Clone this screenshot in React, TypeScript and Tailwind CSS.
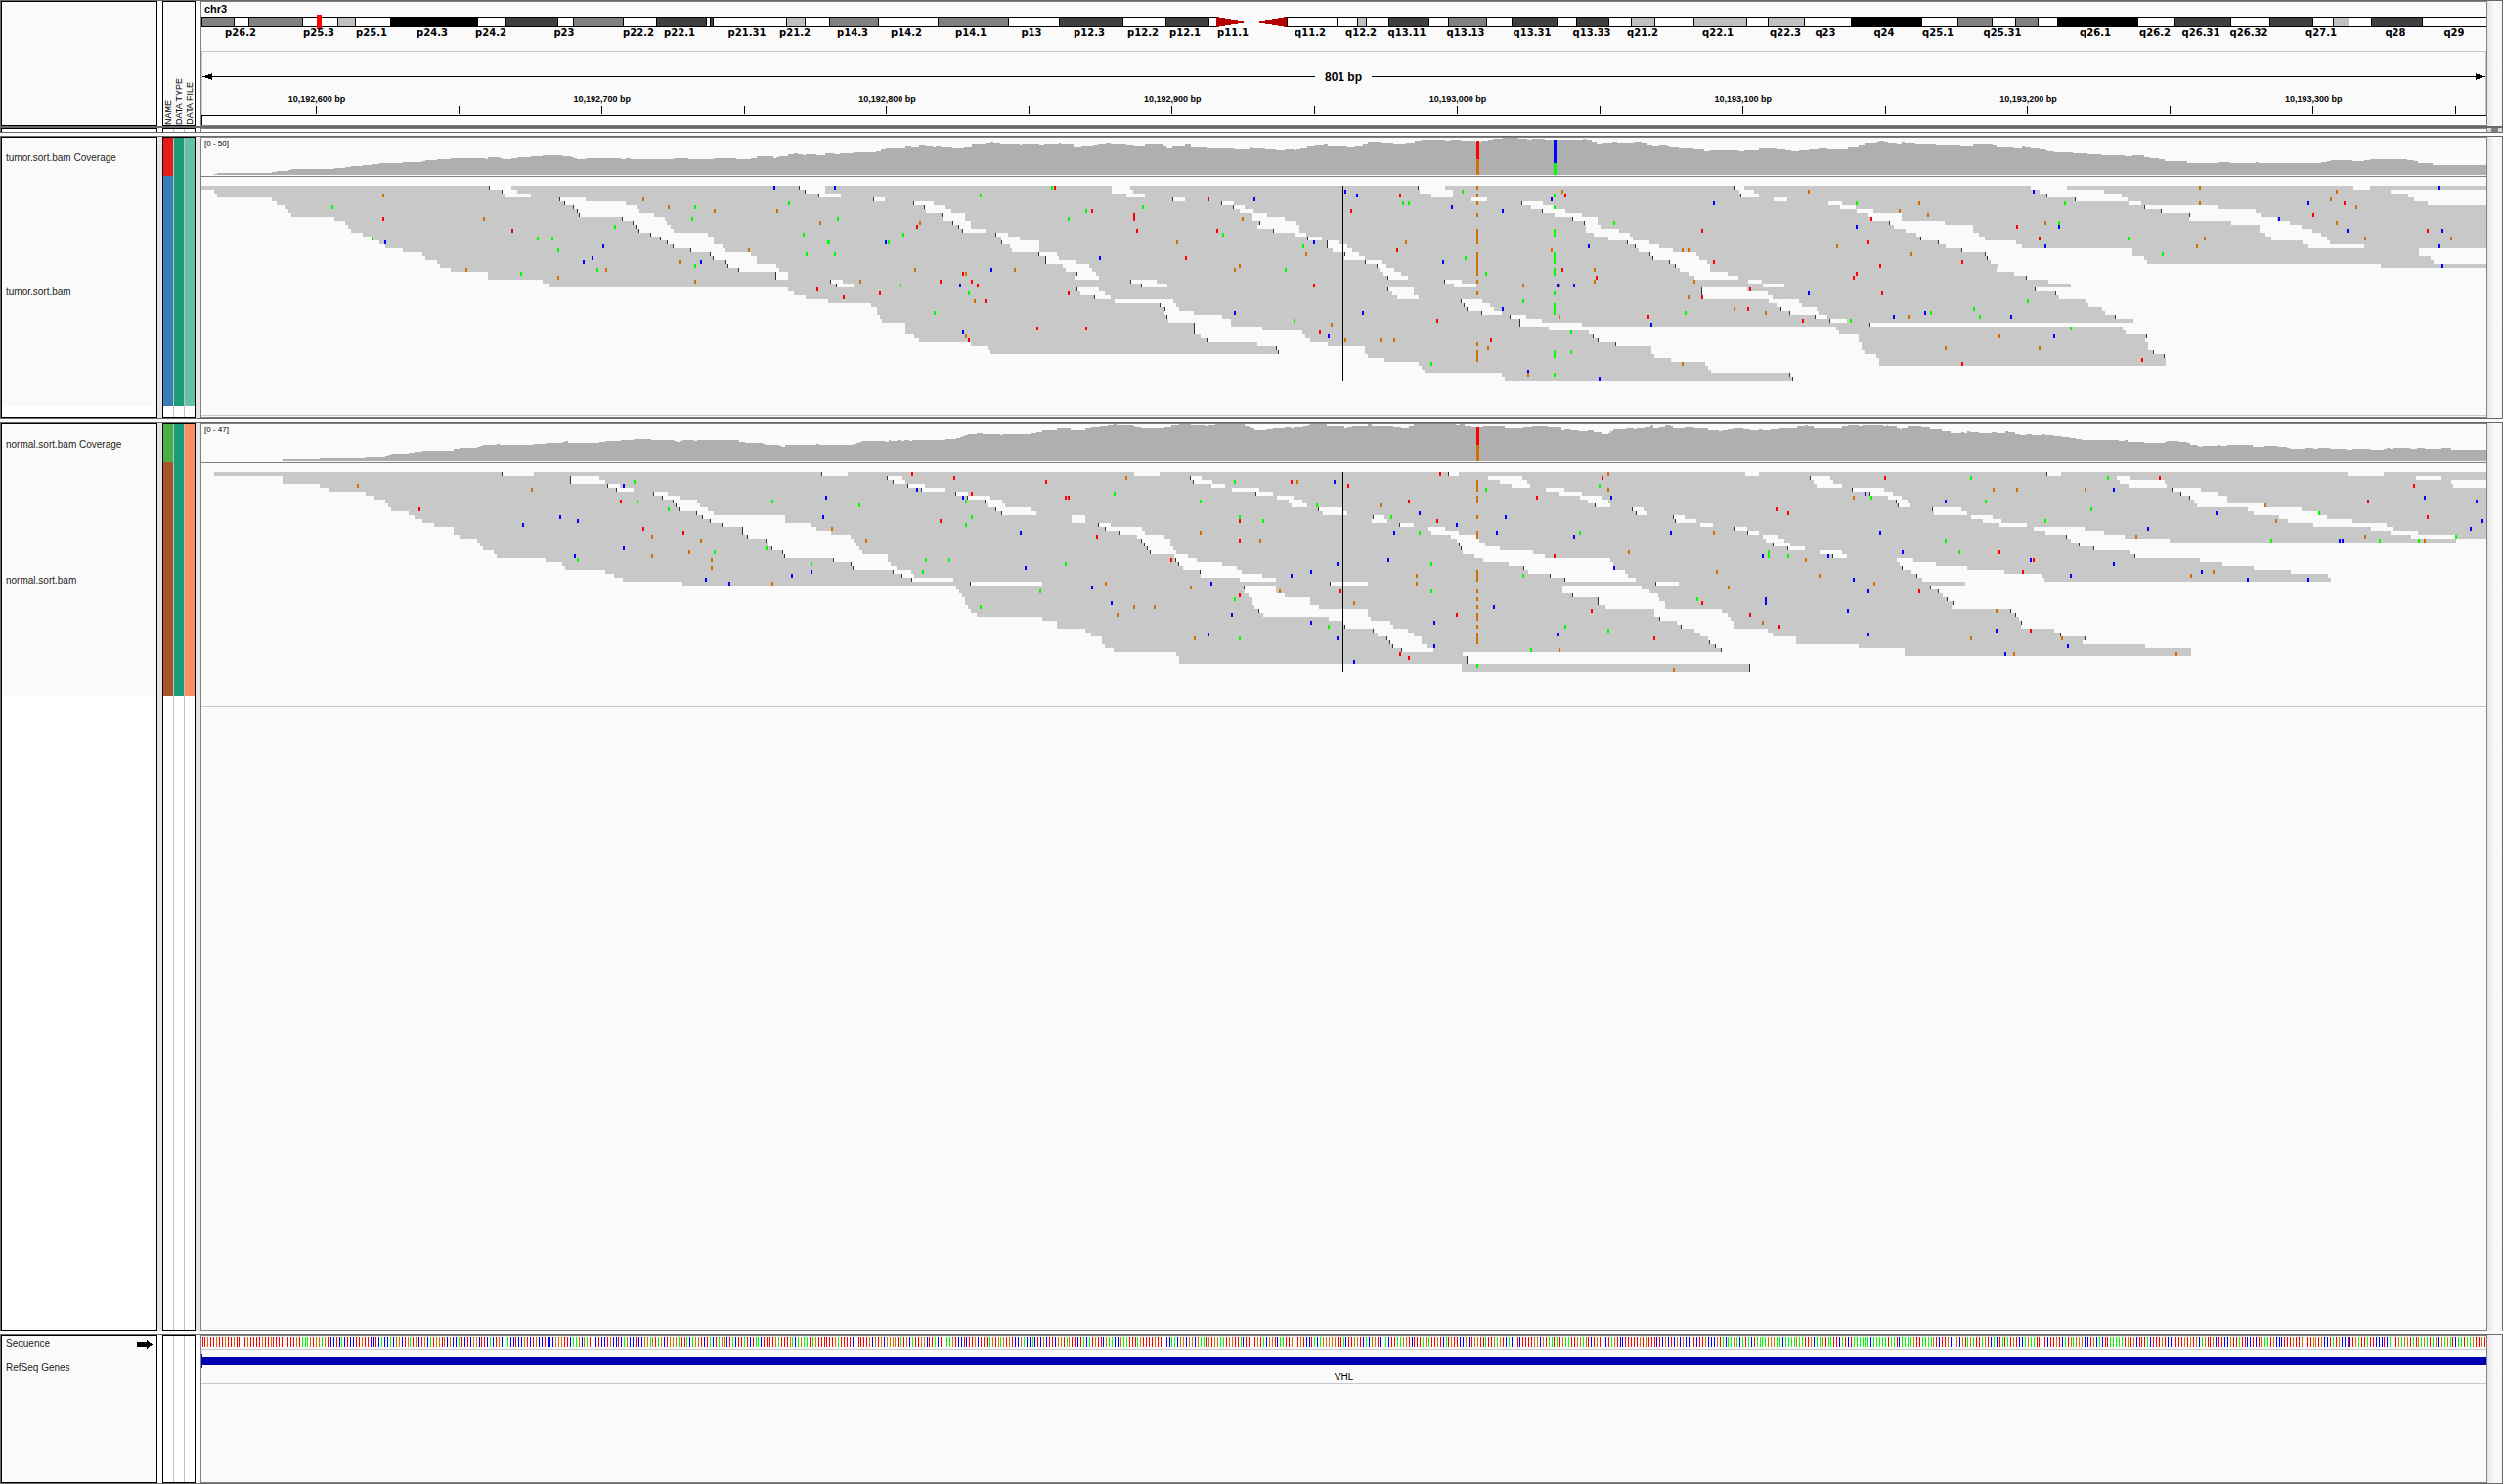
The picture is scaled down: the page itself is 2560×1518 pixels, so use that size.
import React from "react";

type Base = "T" | "G" | "C" | "A";

const BASE_FILL: Record<Base, string> = {
  T: "#ff0000",
  G: "#d17105",
  C: "#0000ff",
  A: "#00ff00",
};

/* Width of the data panel in drawing units and its left edge in the data tables. */
const VIEW_W = 2337;
const VIEW_X = 206;

/* The tables are split in three tiles, each with its own origin and resolution. */
type Tile = { origin: number; scale: number; end: number };
const TILES: Tile[] = [
  { origin: 0, scale: 1568 / 860, end: 1568 },
  { origin: 840, scale: 1568 / 860, end: 1568 },
  { origin: 1690, scale: 1568 / 870, end: 1568 },
];

const toX = (tile: Tile, x: number) =>
  Math.min(VIEW_W, Math.max(0, Math.round(tile.origin + x / tile.scale) - VIEW_X));

type Track = {
  rows: number;
  coverageShift: number;
  coverage: string[];
  gaps: string[];
  marks: string[];
  columns: { x: number; base: Base; rows: number[] }[];
  variants: { x: number; parts: [number, number, Base][] }[];
  endLine: number;
};

/* Rows are separated by "|". "a-b" is an uncovered stretch, "at-b" one that begins with a read-end tick. */
const TUMOR: Track = {
  rows: 50,
  coverageShift: 11,
  endLine: 284,
  coverage: [
    "399,144 405,141 507,138 516,135 538,132 543,129 624,126 644,123 655,120 676,117 693,114 707,111 751,108 788,105 793,102 815,99 841,96 906,99 910,93 932,96 937,99 953,96 965,93 990,90 1012,87 1048,90 1065,93 1070,96 1075,99 1092,96 1157,99 1167,96 1176,99 1256,96 1284,99 1331,96 1373,99 1400,96 1411,90 1442,96 1448,93 1453,90 1470,84 1480,81 1487,84 1497,87 1502,84 1522,87",
    "0,87 7,81 23,84 35,78 60,75 103,72 112,66 120,63 157,57 168,60 182,54 195,57 208,60 213,57 223,60 245,63 267,60 280,51 307,48 316,45 321,48 333,51 370,54 373,51 407,54 416,51 443,48 447,51 470,60 485,57 507,54 516,51 530,48 540,51 569,54 583,57 603,51 636,57 643,63 655,57 679,51 689,60 718,63 770,66 798,60 803,63 827,66 848,69 865,66 882,69 887,66 893,63 907,57 920,54 937,51 945,57 980,60 995,57 1010,51 1020,45 1042,48 1067,51 1090,48 1107,42 1120,39 1163,42 1172,39 1193,42 1220,45 1230,42 1243,39 1253,36 1270,33 1300,36 1317,39 1325,36 1350,39 1420,36 1425,39 1437,45 1445,51 1455,48 1475,45 1485,48 1515,45 1530,48 1540,54",
    "0,57 13,54 27,57 32,60 49,63 75,66 96,72 106,69 158,72 170,69 196,63 228,66 245,69 256,72 270,69 288,66 306,63 323,66 360,60 380,54 391,48 412,45 418,42 427,45 434,48 450,51 460,45 465,48 485,51 523,54 568,57 591,51 628,54 634,60 666,63 681,57 686,60 697,63 713,66 724,69 729,72 740,75 775,78 797,81 802,84 827,87 870,90 885,87 907,93 917,96 933,99 944,105 986,111 1044,108 1065,111 1112,108 1117,111 1233,108 1244,105 1250,102 1290,105 1312,102 1323,99 1391,102 1404,105 1411,111 1438,117",
  ],
  gaps: [
    "911t-953 1490t-1539|0-399 936t-965 1500t-1539|0-405 941t-990 1526t-1568|0-507 1043t-1092|0-516 1052t-1167|0-532 1068t-1187|0-538 1075t-1192|0-543 1080t-1220|0-624 1160t-1240|0-644 1180t-1244|0-649 1186t-1251|0-655 1190t-1256|0-676 1213t-1320|0-693 1230t-1331|0-707 1244t-1331|0-718 1255t-1347|0-751 1287t-1353|0-788 1324t-1400|0-793 1329t-1411|0-815 1352t-1411|0-820 1357t-1448|0-841 1377t-1453|0-910 1446t-1470|0-910 1446t-1470|0-1012 1548t-1568|0-1023 1559t-1568|0-1470|0-1480|0-1502|0-1544",
    "0-7 542-576 1112t-1163|0-7 542-582 1116-1178|0-35 569-603 1138-1178|96t-119 655t-678 1212-1242|172t-210 746t-769 1306t-1345|192t-232 768t-789 1323-1366|195-243 780-806 1343t-1387|224t-268 802-832 1367-1418|226-268 802-864 1401t-1448|245t-279 816t-886 1423t-1448|256t-279 814-892 1426-1454|262t-306 843t-892 1426-1487|325t-348 882-905 1440-1508|336-370 907t-934 1468-1514|336t-407 943t-966 1502t-1545|351-407 943t-980 1517t-1562|356-407 953-990 1525-1568|405t-439 976t-1003 1545t-1568|417t-443 976-1014 1550t-1568|417t-476 1013t-1044|450-500 1035t-1054|456-505 1041-1069|475t-512 1048-1082|472-518 1055t-1094|17t-40 576t-625 1161t-1194|28t-60 597t-645 1180-1222|475t-518 1055t-1105|483-529 1065-1105|508t-540 1074-1114|0-13 547-656 1193t-1232|0-93 630t-662 1198t-1247|0-104 640t-667 1203t-1254|0-104 639-695 1231t-1269|0-109 644t-748 1284t-1315|0-113 647-764 1301t-1344|0-157 694t-764 1301t-1418|0-157 694t-822 1357-1568|0-157 694t-897 1431-1568|0-173 707-903 1439t-1568|0-182 718t-912 1448t-1568|0-279 813-944 1480t-1568|0-310 847t-1014 1548-1568|0-315 852t-1014 1548-1568|0-1019 1553-1568|0-1050|0-1114|0-1119|0-1125|0-1269|0-1274",
    "149t-169 697-764 1292-1323|160-187 714-833 1361-1568|163t-196 727t-865 1393-1568|223-249 779t-876 1404-1568|324-350 878-901 1429-1568|346-375 906t-1044|377-407 938t-1112|398-460 990t-1123|404-460 989-1152|437t-539 1067-1175|445-591 1119-1197|467-591 1119-1217|487-602 1130-1233|494t-613 1141-1244|527t-670 1199-1249|0-13 541-681 1209-1312|0-38 569t-885 1413-1568|0-81 612t-885 1413-1568|0t-87 617t-907 1435-1568|31t-101 623-912 1440-1568|42t-106 637t-1343|50-106 634-1568|67-139 667-1568|77-159 689t-1568|177-202 730-1568|204-243 771-1568|91t-175 705t-1568|91t-213 743t-1568|91-222 750-1568|214-270 798-1568|229-276 803-1568|237t-302 829-1568|253t-306 834-1568|300t-323 853t-1568|327t-359 887-1568|400t-1568|0-339 867-1568|0-344 872-1568|0-380 911t-1568|0-380 909-1568|0-386 914-1568|0-386 914-1568|0-391 922t-1568|4-413 943t-1568|34-418 946-1568|97-418 946-1568|103-1568|108-1568|253t-1568|258t-1568",
  ],
  marks: [
    "714.2G 714.8T 620.5A 695.13A 719.14C 902.8G 955.11T 1003.13A 1030.13A 1041.16A 1125.15C 1147.10A 1105.18C 1088.19C 1114.21A 1130.21G 1041.23G 972.22A 870.21G 1200.3G 1247.5G 1296.5A 1291.8A 1333.6G 1444.0C 1471.4A 1449.6G 1530.9G 1562.8A 1557.0C 1499.12A 1545.14A 1504.17A 1557.17A 1396.16G 1268.19G 1307.19C 1296.20A 1296.24G 1524.26T",
    "25.0C 430.0A 436.0T 297.2A 600.5A 722.3T 808.3C 494.6A 505.6T 583.7T 583.8T 461.8A 184.9G 179.10T 153.12A 14.14A 120.14C 126.14A 25.17A 589.11T 739.11T 749.12A 786.8G 663.14G 898.15A 919.14C 904.17G 680.18T 519.18C 781.20G 771.21G 866.21A 175.21G 317.21C 361.21G 264.22T 270.22G 222.24T 281.24T 73.24G 148.25A 259.25C 292.25T 919.25T 110.27T 275.27A 461.27T 42.28T 286.29G 307.29T 211.32A 771.32C 883.34A 952.35G 403.36T 494.36T 930.37T 264.37C 270.38G 275.39T 946.38C 977.39G 1043.39G 1068.39G 977.1C 999.2C 1079.2T 1085.4A 1096.4A 988.6T 1176.5C 1196.1A 1271.6C 1382.1G 1387.2T 1362.3C 1478.9A 1431.15C 1362.16G 1090.14G 1074.16T 1202.18A 1160.19C 1240.22A 1382.21T 1442.21G 1446.23T 1442.24G 1376.25G 1373.25C 1404.25C 1309.25G 1309.29A 1271.31C 1010.32C 1148.34T 1376.33G 1542.33T 1548.35C 1398.37A 1249.39T 1243.41G 1398.42A 1138.45A 1318.47C 1318.48G 1451.49C",
    "288.1G 113.4C 376.4A 492.4G 456.6G 508.7G 404.8T 376.10C 92.11T 398.14T 340.15G 55.16G 66.16G 477.17G 113.19T 571.19T 420.20T 376.22T 371.23T 77.24G 181.26T 288.27C 423.27T 66.28G 92.28T 151.31G 176.31T 209.32G 61.32A 277.34T 366.34A 445.33C 472.33G 503.32C 513.32A 593.31A 604.33A 661.33C 692.29A 771.36A 741.38C 640.38G 540.41G 714.41G 571.45T 903.44T 55.45G 703.1C 760.4A 724.9G 750.9A 750.10C 672.10T 714.13T 724.15C 878.13A 1018.13G 1004.15G 941.17A 1009.0G 1009.4G 1261.1G 1251.3G 1209.4C 1276.4T 1297.5G 1218.7T 1155.8C 1261.9G 1281.11C 1314.13G 1429.11T 1456.11C 1472.13G 1451.15C 1451.0C 1456.20C",
  ],
  columns: [
    { x: 1304, base: "G", rows: [0, 2, 4, 7, 11, 12, 13, 14, 17, 18, 19, 20, 21, 22, 24, 27, 40, 42, 43, 44] },
    { x: 1383, base: "A", rows: [2, 5, 11, 12, 17, 18, 19, 21, 22, 27, 30, 31, 32, 42, 43, 48] },
  ],
  variants: [
    { x: 1304, parts: [[3, 22, "T"], [22, 38, "G"]] },
    { x: 1383, parts: [[2, 26, "C"], [26, 38, "A"]] },
  ],
};

const NORMAL: Track = {
  rows: 51,
  coverageShift: 14,
  endLine: 288,
  coverage: [
    "527,150 596,147 613,144 682,141 718,138 724,135 729,132 762,129 773,126 788,123 846,117 857,114 890,111 895,108 901,105 926,102 932,105 995,102 1017,99 1048,96 1054,93 1059,99 1118,96 1129,93 1158,90 1181,87 1214,90 1256,93 1262,96 1267,93 1273,90 1295,93 1300,90 1378,96 1389,99 1422,102 1427,105 1453,108 1459,111 1464,105 1522,102 1528,105",
    "0,105 60,102 66,99 72,96 77,93 120,96 125,90 130,93 142,90 150,93 155,90 165,93 169,90 232,87 252,84 258,81 263,78 268,75 274,72 290,69 300,72 333,75 337,72 390,69 402,66 412,60 440,54 465,60 492,54 503,51 520,48 535,45 545,43 551,45 581,48 586,51 596,54 640,51 652,45 668,42 690,45 716,48 720,45 735,42 749,45 750,42 790,48 796,51 801,54 807,60 829,57 842,54 864,51 876,54 881,51 898,48 908,45 912,42 942,48 975,54 980,51 990,48 1020,42 1026,48 1066,51 1082,54 1095,48 1105,42 1183,45 1190,42 1199,48 1213,51 1235,48 1275,54 1310,51 1326,48 1355,51 1380,60 1385,57 1397,60 1413,63 1430,60 1440,66 1455,72 1467,69 1472,63 1477,57 1500,54 1515,57 1520,54 1535,51 1547,45",
    "0,45 2,54 13,51 23,45 32,48 37,54 60,51 77,54 102,60 123,63 128,60 139,57 149,54 167,57 180,60 196,57 202,60 218,57 234,54 266,48 281,45 287,48 298,54 350,48 360,45 380,48 388,45 425,48 432,45 434,48 450,54 456,57 460,54 470,48 495,51 512,57 533,63 550,69 570,66 575,69 580,63 586,66 602,69 625,66 634,69 650,63 656,66 668,72 677,75 688,72 700,75 717,72 724,75 740,78 755,81 770,84 780,87 791,90 860,93 870,90 876,96 907,99 944,96 948,93 969,96 986,99 992,105 1003,108 1008,111 1012,108 1044,105 1048,108 1060,105 1107,111 1128,108 1153,111 1170,114 1175,117 1202,114 1218,117 1228,114 1249,117 1280,120 1290,117 1323,120 1348,117 1353,114 1359,117 1365,114 1397,117 1410,114 1424,117 1454,114 1472,120",
  ],
  gaps: [
    "0-399 936t-995 1532t-1568|0-527 1063t-1118|0-527 1063t-1129|0-596 1132t-1156|0-613 1149t-1181|0-682 1218t-1245|0-698 1234t-1267|0-718 1255t-1300|0-724 1260t-1305|0-729 1265t-1320|0-762 1298t-1331|0-773 1309t-1464|0-788 1324t-1464|0-810 1345t-1511|0-846 1383t-1522|0-846 1383t-1550|0-857 1393t-1568|0-890 1427t-1568|0-895 1432t-1568|0-901 1438t-1568|0-921 1458t-1568|0-926 1462t-1568|0-1017 1554t-1568|0-1048|0-1054|0-1129|0-1145|0-1161|0-1273",
    "0t-49 583-631 1168t-1189|123t-151 688t-709 1243-1307|133t-157 693t-730 1265-1316|160t-193 727-753 1287-1322|186t-232 766-816 1351-1386|250t-273 810t-842 1377-1418|272t-315 850-881 1415-1455|305t-337 872-897 1430-1467|310t-343 877-906 1443t-1471|325t-390 926t-974 1511t-1534|336t-401 935-981 1518t-1541|467-492 1028t-1050|467-492 1026-1056|516t-540 1077t-1105|528t-598 1132-1163|0-18 555t-603 1138-1189|0-55 589-640 1174-1225|0-60 597t-651 1186-1227|0-66 602t-651 1188t-1238|0-71 607t-656 1192t-1265|0-77 613t-662 1196-1327|0-124 658-684 1218-1349|22t-124 660t-700 1234-1471|54t-129 665t-748 1282-1477|59t-140 675-774 1310t-1480|133t-168 705t-784 1318-1499|150t-173 707-822 1358t-1504|167t-246 780-848 1385t-1519|278t-412 948t-1019 1555t-1568|0-252 788t-848 1382-1530|0-257 790-848 1382-1545|0-263 797-864 1401t-1560|0-268 802-912 1448t-1563|0-268 802-912 1448t-1568|0-273 808-928 1462-1568|0-279 815t-1019 1554-1568|0-290 824-1019 1560-1568|0-412 946-1025 1562t-1568|0-439 972-1061|0-439 976t-1067|0-492 1028t-1094|0-503 1037-1105|0-523 1054t-1119|0-523 1059t-1119|0-529 1065t-1130|0-545 1082t-1141|0-662 1196-1568|0-667 1204t-1568|0-667 1204t-1568|0-1194|0-1194",
    "171-196 727t-753 1281-1348|291t-328 856-880 1408-1454|297-333 861-944 1472-1568|303-350 878-948 1476-1568|368t-427 957t-1011|401t-443 973t-1044|434-460 990t-1060|448t-470 998-1060|453t-476 1004-1131|516t-570 1098-1197|519-580 1108-1228|37t-59 588-627 1155-1244|42t-81 609-643 1171-1290|88-112 640-690 1218-1354|149t-175 703-797 1325-1364|174t-196 725-833 1361-1411|204-232 763t-871 1399-1480|209-243 771-953 1481-1568|221t-254 785t-1568|248t-281 812t-1568|308-350 880t-1568|332t-359 889t-1568|451-481 1009-1568|456-523 1051-1568|459t-580 1108-1568|478-649 1177-1568|486t-717 1245-1568|497-723 1251-1568|6t-49 577-1568|511t-1568|527t-1568|0-7 535-1568|0-13 543t-1568|0-23 554t-1568|0-23 552-1568|4-128 659t-1568|4-139 669t-1568|12t-144 675-1568|45-150 680t-1568|53t-150 680-1568|77-213 741-1568|88-222 752t-1568|103-265 796t-1568|105t-265 793-1568|115t-380 908-1568|127t-465 993-1568|0-465 993-1568|0-1568|0-1568|179t-1568|179t-1568",
  ],
  marks: [
    "667.3G 992.4G 783.9T 1183.2A 1163.3C 1158.7T 1189.7A 1247.9A 1045.11C 1077.12C 975.13C 1200.14T 1216.16G 1274.15T 1307.17G 1285.20G 1333.20A 1163.19C 1216.21G 1072.21C 1077.22A 1327.22G 1327.24G 1316.27C 1360.28C 1440.28G 1430.19A 1513.23A 1513.25C 1477.26C 1440.7A 1540.6C 1535.11C 1551.14G",
    "169.0T 248.1T 419.2T 569.1G 179.4C 281.5T 264.6C 270.7A 72.8A 456.6T 461.6T 547.5A 281.11A 222.12T 270.13A 372.15C 514.16T 84.17G 771.2A 877.2T 888.2G 957.2C 983.3T 707.7A 925.8A 781.11A 781.12T 824.12A 1043.8G 1096.7T 1116.10C 1063.11A 1148.12T 1185.13C 707.15G 781.17T 818.17G 1068.15C 1116.15A 195.22A 239.22A 456.23A 381.24C 189.25A 653.22T 963.23C 913.25C 877.26C 1057.22C 1138.23A 1110.26G 1110.28G 530.28G 505.29C 408.30A 690.29G 727.28C 781.31T 771.32A 855.30G 968.30T 993.33G 1138.30A 541.33C 583.34G 622.34G 297.34A 552.36G 766.36C 913.38C 946.39A 722.41C 696.42G 781.42A 963.42C 1079.46T 1096.47T 993.48C 1143.38C 1143.44C 1185.36T 1223.49A 1254.34C 1154.0T 1468.0G 1457.1T 1451.3A 1468.4G 1240.4A 1334.6T 1473.6C 1276.11C 1260.15C 1415.15A 1404.16C 1506.20G 1367.21T 1478.24C 1309.26A 1437.35T 1387.39A 1373.41C 1468.40A 1553.42T 1324.45A 1376.45G",
    "429.1T 587.1A 840.1A 935.1T 629.4G 672.4G 798.4G 850.4C 393.5C 404.6A 371.6G 540.7C 614.7A 229.9T 250.10T 809.9A 1040.10C 1130.8G 1229.10A 1150.12G 724.12A 914.14C 892.16G 34.15C 113.15G 420.15C 540.17A 1404.3T 1424.6C 1319.7T 1519.7C 1429.11T 1530.12C 1508.14C 1314.16G 1481.16A 1141.17A 1267.17C 1272.17C 1341.17A 1413.17A 1424.17G 461.20C 566.20A 640.20T 214.20A 214.21A 203.21C 250.21A 324.21C 283.22G 698.22C 703.22T 850.23C 683.25T 771.26C 1013.25C 1034.25G 993.26G 1097.27C 1209.27C 119.25G 308.26G 371.27C 409.28G 140.29G 398.30C 492.30T 83.32A 92.33T 209.32C 209.33C 360.35C 634.35G 181.36T 203.38G 234.39T 634.40C 698.40T 398.41C 587.42G 755.42G 766.44C 650.46C 667.46G 966.46G 39.50G",
  ],
  columns: [
    { x: 1304, base: "G", rows: [2, 3, 4, 6, 7, 11, 15, 16, 25, 26, 27, 30, 32, 34, 36, 37, 39, 41, 42, 43] },
  ],
  variants: [{ x: 1304, parts: [[3, 21, "T"], [21, 38, "G"]] }],
};

const READ_TOP = 49;
const ROW_H = 4;

function coveragePath(track: Track) {
  let d = "";
  let open = false;
  track.coverage.forEach((line, i) => {
    line.split(" ").forEach((pair) => {
      const [x, y] = pair.split(",").map(Number);
      const px = toX(TILES[i], x);
      const py = Math.round(y / 3) - track.coverageShift;
      d += open ? `H${px}V${py}` : `M${px} 38V${py}`;
      open = true;
    });
  });
  return `${d}H${VIEW_W}V38Z`;
}

function readPaths(track: Track) {
  let gaps = "";
  let ticks = "";
  TILES.forEach((tile, i) => {
    const rows = track.gaps[i].split("|");
    for (let r = 0; r < track.rows; r++) {
      const y = READ_TOP + r * ROW_H;
      (rows[r] ?? `0-${i === 0 ? 1532 : tile.end}`).split(" ").forEach((span) => {
        const [from, to] = span.split("-");
        const a = toX(tile, parseInt(from, 10));
        const b = toX(tile, Number(to));
        gaps += `M${a} ${y}H${b}v${ROW_H}H${a}Z`;
        if (from.endsWith("t")) ticks += `M${a} ${y}h1v${ROW_H}h-1Z`;
      });
    }
  });
  return { gaps, ticks };
}

function markPaths(track: Track) {
  const out: Record<Base, string> = { T: "", G: "", C: "", A: "" };
  track.marks.forEach((line, i) => {
    line.split(" ").forEach((m) => {
      const base = m.slice(-1) as Base;
      const [x, r] = m.slice(0, -1).split(".").map(Number);
      out[base] += `M${toX(TILES[i], x) - 1} ${READ_TOP + r * ROW_H}h2v${ROW_H}h-2Z`;
    });
  });
  track.columns.forEach((c) => {
    c.rows.forEach((r) => {
      out[c.base] += `M${c.x} ${READ_TOP + r * ROW_H}h2v${ROW_H}h-2Z`;
    });
  });
  return out;
}

function AlignmentPlot({ track, label, className }: { track: Track; label: string; className: string }) {
  const { gaps, ticks } = readPaths(track);
  const marks = markPaths(track);
  const bottom = READ_TOP + track.rows * ROW_H;
  const height = track.endLine + 2;
  return (
    <svg
      role="img"
      aria-label={label}
      className={className}
      viewBox={`0 0 ${VIEW_W} ${height}`}
      preserveAspectRatio="none"
      shapeRendering="crispEdges"
    >
      <path d={coveragePath(track)} fill="#afafaf" />
      {track.variants.map((v) =>
        v.parts.map(([from, to, base]) => (
          <rect key={`${v.x}-${from}`} x={v.x} y={from} width={3} height={to - from} fill={BASE_FILL[base]} />
        )),
      )}
      <rect x={0} y={39} width={VIEW_W} height={1} fill="#808080" />
      <rect x={0} y={READ_TOP} width={VIEW_W} height={track.rows * ROW_H} fill="#c8c8c8" />
      <path d={gaps} fill="#fafafa" />
      <path d={ticks} fill="#333333" />
      {(Object.keys(marks) as Base[]).map((b) => (
        <path key={b} d={marks[b]} fill={BASE_FILL[b]} />
      ))}
      <rect x={1167} y={READ_TOP} width={1} height={bottom - READ_TOP} fill="#000000" />
      <rect x={0} y={track.endLine} width={VIEW_W} height={1} fill="#c8c8c8" />
    </svg>
  );
}

const pct = (x: number) => `${((x - VIEW_X) / VIEW_W) * 100}%`;

/* Right edge and stain of every cytoband, in order along the chromosome. */
const BANDS: [number, string][] = [
  [239, "#808080"], [254, "#fff"], [309, "#808080"], [345, "#fff"], [363, "#c0c0c0"], [399, "#fff"],
  [488, "#000"], [517, "#fff"], [570, "#404040"], [586, "#fff"], [637, "#808080"], [671, "#fff"],
  [722, "#404040"], [726, "#fff"], [729, "#404040"], [804, "#fff"], [823, "#c0c0c0"], [848, "#fff"],
  [898, "#808080"], [959, "#fff"], [1031, "#808080"], [1083, "#fff"], [1148, "#404040"], [1192, "#fff"],
  [1236, "#404040"], [1244, "#fff"], [1316, "centromere"], [1367, "#fff"], [1388, "#fff"], [1397, "#c0c0c0"],
  [1420, "#fff"], [1461, "#404040"], [1481, "#fff"], [1520, "#808080"], [1546, "#fff"], [1592, "#404040"],
  [1612, "#fff"], [1645, "#404040"], [1668, "#fff"], [1692, "#c0c0c0"], [1732, "#fff"], [1786, "#c0c0c0"],
  [1808, "#fff"], [1845, "#c0c0c0"], [1893, "#fff"], [1965, "#000"], [2002, "#fff"], [2037, "#808080"],
  [2061, "#fff"], [2084, "#808080"], [2104, "#fff"], [2186, "#000"], [2224, "#fff"], [2281, "#404040"],
  [2321, "#fff"], [2365, "#404040"], [2386, "#fff"], [2402, "#c0c0c0"], [2425, "#fff"], [2477, "#404040"],
  [2543, "#fff"],
];

const BAND_LABELS: [string, number][] = [
  ["p26.2", 246], ["p25.3", 326], ["p25.1", 380], ["p24.3", 442], ["p24.2", 502], ["p23", 577],
  ["p22.2", 653], ["p22.1", 695], ["p21.31", 764], ["p21.2", 813], ["p14.3", 872], ["p14.2", 927],
  ["p14.1", 993], ["p13", 1055], ["p12.3", 1114], ["p12.2", 1169], ["p12.1", 1212], ["p11.1", 1261],
  ["q11.2", 1340], ["q12.2", 1392], ["q13.11", 1439], ["q13.13", 1499], ["q13.31", 1567], ["q13.33", 1628],
  ["q21.2", 1680], ["q22.1", 1757], ["q22.3", 1826], ["q23", 1867], ["q24", 1927], ["q25.1", 1982],
  ["q25.31", 2048], ["q26.1", 2143], ["q26.2", 2204], ["q26.31", 2251], ["q26.32", 2300], ["q27.1", 2374],
  ["q28", 2450], ["q29", 2510],
];

function Ideogram() {
  return (
    <svg role="img" aria-label="chr3 ideogram" className="block h-[34px] w-full" shapeRendering="crispEdges">
      {BANDS.map(([end, fill], i) => {
        const start = i ? BANDS[i - 1][0] : VIEW_X;
        if (fill === "centromere") return null;
        return (
          <rect key={end} x={pct(start)} y={3} width={`${((end - start) / VIEW_W) * 100}%`} height={9} fill={fill} />
        );
      })}
      {BANDS.map(([end, fill]) =>
        end === 2543 ? null : (
          <rect key={`${end}${fill}`} x={pct(end)} y={3} width={1} height={9} fill="#000" />
        ),
      )}
      <rect x="0" y={2} width={pct(1244)} height={1} fill="#000" />
      <rect x="0" y={12} width={pct(1244)} height={1} fill="#000" />
      <rect x={pct(1316)} y={2} width={`${((2543 - 1316) / VIEW_W) * 100}%`} height={1} fill="#000" />
      <rect x={pct(1316)} y={12} width={`${((2543 - 1316) / VIEW_W) * 100}%`} height={1} fill="#000" />
      <rect x="0" y={2} width={1} height={11} fill="#000" />
      <svg
        x={pct(1244)}
        y={2}
        width={`${(72 / VIEW_W) * 100}%`}
        height={11}
        viewBox="0 0 72 11"
        preserveAspectRatio="none"
      >
        <path d="M0 0L34 5.5L0 11ZM72 0L38 5.5L72 11Z" fill="#b40000" />
      </svg>
      <rect x={pct(324)} y={0} width={5} height={15} fill="#ff0000" />
      {BAND_LABELS.map(([name, x]) => (
        <text
          key={name}
          x={pct(x)}
          y={22}
          textAnchor="middle"
          className="fill-black font-['DejaVu_Sans',sans-serif] text-[10px] font-bold"
        >
          {name}
        </text>
      ))}
    </svg>
  );
}

const RULER_LABELS = [
  "10,192,600 bp", "10,192,700 bp", "10,192,800 bp", "10,192,900 bp",
  "10,193,000 bp", "10,193,100 bp", "10,193,200 bp", "10,193,300 bp",
];

function Ruler() {
  return (
    <svg
      role="img"
      aria-label="Genome ruler"
      className="block h-[66px] w-full border-x border-t border-[#c8c8d2]"
      shapeRendering="crispEdges"
    >
      <rect x="0" y={25} width="48.75%" height={1} />
      <rect x="51.2%" y={25} width="48.75%" height={1} />
      <svg x="0" y={22} width={10} height={7}>
        <path d="M0 3.5L10 0V7Z" />
      </svg>
      <svg x="100%" y={22} width={10} height={7} className="overflow-visible">
        <path d="M0 3.5L-10 0V7Z" />
      </svg>
      <text x={pct(1374)} y={30} textAnchor="middle" className="text-[12px] font-bold">
        801 bp
      </text>
      {RULER_LABELS.map((label, i) => (
        <g key={label}>
          <text x={pct(323 + i * 292)} y={51} textAnchor="middle" className="text-[9px] font-bold">
            {label}
          </text>
          <rect x={pct(322 + i * 292)} y={55} width={1} height={9} />
          <rect x={pct(468 + i * 292)} y={55} width={1} height={9} />
        </g>
      ))}
    </svg>
  );
}

const SEQUENCE_HEAD =
  "TTGTTGTTGTTGTTTTGTTTTGTTGTTTTTTTTGTAAAGTGGAGTCCTCACTCCTTGTTCCTCACCACGGCTGATGCTGCATGGTGCGCCATCTCGGCTTCACTGCAACCTCCGTCTGCCTCCCGGGTTCAAGCGATTCTCCTGCCTCAGCCTCCGGAGTAGCTGGGATTACAGG";

function buildSequence(length: number) {
  let seed = 97;
  const next = () => {
    seed = (seed * 16807) % 2147483647;
    return seed / 2147483647;
  };
  let seq = SEQUENCE_HEAD;
  while (seq.length < length) {
    const f = seq.length / length;
    const n = next();
    if (f > 0.67 && f < 0.76) seq += n < 0.56 ? "A" : n < 0.72 ? "G" : n < 0.87 ? "T" : "C";
    else seq += n < 0.36 ? "T" : n < 0.58 ? "A" : n < 0.79 ? "C" : "G";
  }
  return seq.slice(0, length);
}

function SequencePlot() {
  const seq = buildSequence(801);
  const paths: Record<Base, string> = { T: "", G: "", C: "", A: "" };
  [...seq].forEach((b, i) => {
    paths[b as Base] += `M${1 + Math.floor((i * VIEW_W) / 801)} 1h1v10h-1Z`;
  });
  return (
    <svg
      role="img"
      aria-label="Reference sequence"
      className="block h-[13px] w-full"
      viewBox={`0 0 ${VIEW_W} 13`}
      preserveAspectRatio="none"
      shapeRendering="crispEdges"
    >
      {(Object.keys(paths) as Base[]).map((b) => (
        <path key={b} d={paths[b]} fill={BASE_FILL[b]} />
      ))}
    </svg>
  );
}

function Splitter() {
  return <div className="h-[5px] flex-none border-y border-[#69696b] bg-[#fafafa]" />;
}

type PanelProps = {
  className?: string;
  gutter: string;
  names: React.ReactNode;
  attributes: React.ReactNode;
  children?: React.ReactNode;
};

/* One horizontal band of the viewer: track names, attribute columns, data, scroll area. */
function Panel({ className = "", gutter, names, attributes, children }: PanelProps) {
  return (
    <section className={`flex border-x border-[#69696b] ${gutter} ${className}`}>
      <div className="w-40 flex-none overflow-hidden border border-black bg-white">{names}</div>
      <div className="ml-[5px] flex w-[34px] flex-none overflow-hidden border border-black bg-white">{attributes}</div>
      <div className="ml-[5px] flex min-w-0 flex-1 flex-col overflow-hidden border border-[#808080] bg-[#fafafa]">
        {children}
      </div>
      <div className="w-[15px] flex-none bg-gradient-to-r from-[#e4e4e4] via-[#fafafa] to-[#f4f4f4]" />
    </section>
  );
}

function TrackNames({ names }: { names: [string, string][] }) {
  return (
    <>
      {names.map(([name, height]) => (
        <div key={name} className={`flex items-center bg-[#fafafa] pt-0.5 pl-1 text-[#1e1e1e] ${height}`}>
          {name}
        </div>
      ))}
    </>
  );
}

function Columns({ cells }: { cells: React.ReactNode[] }) {
  return (
    <div className="flex flex-1 divide-x divide-[#c0c0c0]">
      {cells.map((cell, i) => (
        <div key={i} className="flex min-w-0 flex-1 flex-col">
          {cell}
        </div>
      ))}
    </div>
  );
}

export default function App() {
  return (
    <main className="flex min-h-screen flex-col border-y border-[#69696b] bg-[#fafafa] font-['Liberation_Sans',Arial,sans-serif] text-[10px] leading-3 text-black">
      <Panel
        className="h-32 flex-none"
        gutter="bg-white"
        names={<div className="h-full bg-[#fafafa]" />}
        attributes={
          <div className="flex flex-1 items-end bg-[#fafafa] text-[9px] leading-[11px]">
            {["NAME", "DATA TYPE", "DATA FILE"].map((name) => (
              <span key={name} className="w-[11px] flex-none rotate-180 whitespace-nowrap [writing-mode:vertical-rl]">
                {name}
              </span>
            ))}
          </div>
        }
      >
        <h1 className="h-[13px] flex-none pl-[3px] text-[11px] leading-[14px] font-bold">chr3</h1>
        <Ideogram />
        <div className="h-[3px] flex-none" />
        <Ruler />
        <div className="flex-1 border-t border-l border-black bg-white" />
      </Panel>
      <div className="h-0.5 flex-none bg-[#69696b]" />
      <div className="flex h-1 flex-none border-x border-[#69696b] bg-white">
        <div className="w-40 flex-none border border-b-0 border-black bg-white" />
        <div className="ml-[5px] flex w-[34px] flex-none border border-b-0 border-black">
          <Columns cells={["", "", ""]} />
        </div>
        <div className="ml-[5px] flex-1 border border-b-0 border-[#808080]" />
        <div className="flex w-[15px] flex-none justify-center bg-[#d8d8d8] px-1">
          <div className="flex-1 bg-[#808080]" />
        </div>
      </div>
      <Splitter />

      <Panel
        className="h-72 flex-none"
        gutter="bg-[#e6e6e6]"
        names={
          <TrackNames
            names={[
              ["tumor.sort.bam Coverage", "h-[39px]"],
              ["tumor.sort.bam", "h-[235px]"],
            ]}
          />
        }
        attributes={
          <Columns
            cells={[
              <>
                <div className="h-[39px] bg-[#e41a1c]" />
                <div className="h-[235px] bg-[#377eb8]" />
              </>,
              <div className="h-[274px] bg-[#1b9e77]" />,
              <div className="h-[274px] bg-[#66c2a5]" />,
            ]}
          />
        }
      >
        <div className="relative">
          <AlignmentPlot track={TUMOR} label="Tumor coverage and alignments" className="block h-[286px] w-full" />
          <span className="absolute top-0 left-[3px] text-[8px]">[0 - 50]</span>
        </div>
      </Panel>
      <Splitter />

      <Panel
        className="flex-1"
        gutter="bg-[#e6e6e6]"
        names={
          <TrackNames
            names={[
              ["normal.sort.bam Coverage", "h-[39px]"],
              ["normal.sort.bam", "h-[239px]"],
            ]}
          />
        }
        attributes={
          <Columns
            cells={[
              <>
                <div className="h-[39px] bg-[#4daf4a]" />
                <div className="h-[239px] bg-[#a65628]" />
              </>,
              <div className="h-[278px] bg-[#1b9e77]" />,
              <div className="h-[278px] bg-[#fc8d62]" />,
            ]}
          />
        }
      >
        <div className="relative">
          <AlignmentPlot track={NORMAL} label="Normal coverage and alignments" className="block h-[290px] w-full" />
          <span className="absolute top-0 left-[3px] text-[8px]">[0 - 47]</span>
        </div>
      </Panel>
      <Splitter />

      <Panel
        className="h-[151px] flex-none"
        gutter="bg-white"
        names={
          <div className="h-full bg-[#fafafa] text-[#1e1e1e]">
            <div className="flex h-4 items-center justify-between pr-1 pl-1">
              <span>Sequence</span>
              <svg className="h-[9px] w-4" viewBox="0 0 16 9" aria-label="Forward strand" shapeRendering="crispEdges">
                <path d="M0 2H10V0L16 4.5L10 9V7H0Z" fill="#000" />
              </svg>
            </div>
            <div className="flex h-8 items-center pl-1">RefSeq Genes</div>
          </div>
        }
        attributes={<Columns cells={["", "", ""]} />}
      >
        <SequencePlot />
        <div className="h-9 flex-none border-y border-[#c8c8d2]">
          <div className="flex h-[22px] items-center">
            <div className="h-[14px] w-px bg-[#0000b2]" />
            <div className="h-2 flex-1 bg-[#0000b2]" />
          </div>
          <div className="h-3 text-center">VHL</div>
        </div>
      </Panel>
    </main>
  );
}
